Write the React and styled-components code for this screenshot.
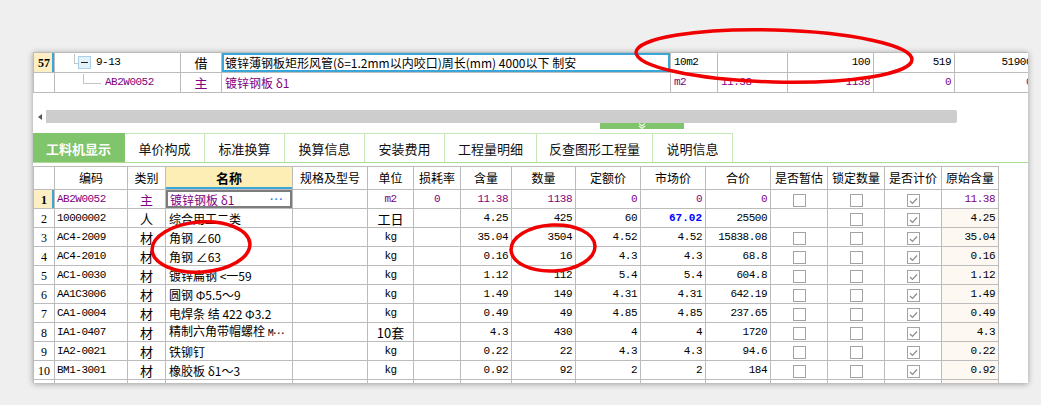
import React from "react";
import styled, { createGlobalStyle, css } from "styled-components";

const GlobalStyle = createGlobalStyle`
  html, body { margin: 0; padding: 0; background: #efefef; }
  body {
    font-family: "Noto Sans CJK SC", "Liberation Sans", sans-serif;
    font-size: 12px;
    color: #000;
  }
`;

const PURPLE = "#800080";
const GRID = "#bcbcbc";

const Page = styled.div`
  position: relative;
  width: 1041px;
  height: 405px;
  box-sizing: border-box;
  padding: 52px 0 0 33px;
  overflow: hidden;
`;

const Panel = styled.div`
  width: 995px;
  height: 331px;
  background: #fff;
  box-shadow: 0 1px 6px rgba(0, 0, 0, 0.35);
  overflow: hidden;
  display: flex;
  flex-direction: column;
`;

const mono = css`
  font-family: "Liberation Mono", "DejaVu Sans Mono", monospace;
  font-size: 11px;
  letter-spacing: -0.5px;
`;

const Grid = styled.table`
  border-collapse: collapse;
  table-layout: fixed;
  width: ${(p) => p.$w}px;
  flex: none;
`;

const Row = styled.tr`
  height: ${(p) => p.$h || 19}px;
`;

const Cell = styled.td`
  border: 1px solid ${GRID};
  padding: 0 ${(p) => (p.$pad != null ? p.$pad : 3)}px;
  white-space: nowrap;
  overflow: hidden;
  text-align: ${(p) => p.$align || "left"};
  color: ${(p) => p.$color || "#000"};
  font-weight: ${(p) => (p.$bold ? 700 : 400)};
  background: ${(p) => p.$bg || "transparent"};
  line-height: 15px;
  ${(p) => p.$mono && mono}
  ${(p) => p.$mono && p.$bold && "letter-spacing: 0;"}
  ${(p) => p.$selRow && css`box-shadow: inset -2px 0 0 #3aa6d8;`}
  ${(p) => p.$selBlue && css`box-shadow: inset 0 0 0 2px #3aa6d8;`}
  ${(p) => p.$selGray && css`box-shadow: inset 0 0 0 2px #7d7d7d;`}
  font-size: ${(p) => (p.$mono ? 11 : p.$size || 12)}px;
`;

const HeadCell = styled.th`
  border: 1px solid ${GRID};
  padding: 0;
  font-weight: ${(p) => (p.$active ? 700 : 400)};
  font-size: ${(p) => (p.$active ? 13 : 12)}px;
  background: ${(p) => (p.$active ? "#fdeeb6" : "#fff")};
  ${(p) => p.$active && css`box-shadow: inset 0 -2px 0 #3aa6d8;`}
  white-space: nowrap;
  overflow: hidden;
  text-align: center;
  line-height: 16px;
`;

const RowNum = styled.span`
  font-family: "Liberation Serif", serif;
  font-size: 12px;
  font-weight: ${(p) => (p.$bold ? 700 : 400)};
`;

const Tree = styled.div`
  display: flex;
  align-items: center;
  height: 18px;
  padding-left: ${(p) => p.$indent}px;
`;

const Connector = styled.span`
  align-self: flex-start;
  width: ${(p) => p.$w}px;
  height: 9px;
  border-left: 1px solid #c4c4c4;
  border-bottom: 1px solid #c4c4c4;
  flex: none;
`;

const ToggleBox = styled.span`
  width: 11px;
  height: 11px;
  border: 1px solid #a9d0e8;
  background: #e3f1fa;
  display: flex;
  align-items: center;
  justify-content: center;
  flex: none;
  &::after {
    content: "";
    width: 7px;
    height: 1px;
    background: #222;
  }
`;

const TreeText = styled.span`
  margin-left: ${(p) => p.$gap}px;
  color: ${(p) => p.$color || "#000"};
  ${mono}
`;

const NameWrap = styled.div`
  display: flex;
  justify-content: space-between;
  align-items: center;
`;

const Dots = styled.span`
  color: #3b7fd8;
  font-family: "Liberation Mono", monospace;
  font-weight: 700;
  letter-spacing: -2px;
  font-size: 11px;
  margin-right: 6px;
`;

const Trail = styled.span`
  font-family: "Liberation Mono", monospace;
  font-size: 10px;
  letter-spacing: -2px;
`;

const Spacer = styled.div`
  height: 17px;
  flex: none;
`;

const ScrollBar = styled.div`
  height: 13px;
  display: flex;
  flex: none;
  background: #fff;
`;

const ScrollBtn = styled.div`
  width: 13px;
  display: flex;
  align-items: center;
  justify-content: center;
  background: #fff;
  &::after {
    content: "";
    border-top: 3px solid transparent;
    border-bottom: 3px solid transparent;
    border-right: 4px solid #555;
  }
`;

const ScrollThumb = styled.div`
  width: 911px;
  background: #cdcdcd;
  border-radius: 0 2px 2px 0;
`;

const HandleRow = styled.div`
  height: 7px;
  flex: none;
  padding-left: 567px;
`;

const Handle = styled.div`
  width: 84px;
  height: 6px;
  background: #80c46c;
  display: flex;
  justify-content: center;
  align-items: flex-start;
`;

const TabBar = styled.div`
  margin-top: 3px;
  height: 29px;
  display: flex;
  flex: none;
  border-bottom: 1px solid #a9dc95;
`;

const Tab = styled.div`
  width: ${(p) => p.$w}px;
  box-sizing: border-box;
  display: flex;
  align-items: center;
  justify-content: center;
  font-size: 13px;
  border-top: 1px solid #c6e8b6;
  border-right: 1px solid #c6e8b6;
  background: ${(p) => (p.$active ? "#80c46c" : "#fff")};
  color: ${(p) => (p.$active ? "#fff" : "#111")};
  font-weight: ${(p) => (p.$active ? 700 : 400)};
  ${(p) => p.$active && "border-color: #80c46c;"}
`;

const TableGap = styled.div`
  height: 3px;
  flex: none;
`;

const Box = styled.span`
  display: inline-flex;
  width: 11px;
  height: 11px;
  border: 1px solid #a3a3a3;
  background: #fff;
  vertical-align: middle;
  align-items: center;
  justify-content: center;
`;

const Overlay = styled.svg`
  position: absolute;
  left: 0;
  top: 0;
  pointer-events: none;
`;

function Check({ on }) {
  return (
    <Box>
      {on && (
        <svg width="9" height="8" viewBox="0 0 9 8">
          <polyline points="1,4 3.5,6.5 8,1.5" fill="none" stroke="#8c8c8c" strokeWidth="1.2" />
        </svg>
      )}
    </Box>
  );
}

const topCols = [21, 126, 41, 449, 47, 70, 86, 81, 81];
const cols = [21, 73, 38, 127, 75, 46, 47, 51, 64, 65, 65, 65, 57, 57, 57, 57];
const headers = ["", "编码", "类别", "名称", "规格及型号", "单位", "损耗率", "含量", "数量", "定额价", "市场价", "合价", "是否暂估", "锁定数量", "是否计价", "原始含量"];

const tabs = [
  ["工料机显示", 92, true],
  ["单价构成", 80],
  ["标准换算", 80],
  ["换算信息", 80],
  ["安装费用", 80],
  ["工程量明细", 92],
  ["反查图形工程量", 116],
  ["说明信息", 80],
];

const rows = [
  { code: "AB2W0052", cat: "主", name: "镀锌钢板 δ1", unit: "m2", loss: "0", qty: "11.38", amt: "1138", dp: "0", mp: "0", total: "0", est: true, orig: "11.38" },
  { code: "10000002", cat: "人", name: "综合用工二类", unit: "工日", loss: "", qty: "4.25", amt: "425", dp: "60", mp: "67.02", total: "25500", est: false, orig: "4.25" },
  { code: "AC4-2009", cat: "材", name: "角钢 ∠60", unit: "kg", loss: "", qty: "35.04", amt: "3504", dp: "4.52", mp: "4.52", total: "15838.08", est: true, orig: "35.04" },
  { code: "AC4-2010", cat: "材", name: "角钢 ∠63", unit: "kg", loss: "", qty: "0.16", amt: "16", dp: "4.3", mp: "4.3", total: "68.8", est: true, orig: "0.16" },
  { code: "AC1-0030", cat: "材", name: "镀锌扁钢 <一59", unit: "kg", loss: "", qty: "1.12", amt: "112", dp: "5.4", mp: "5.4", total: "604.8", est: true, orig: "1.12" },
  { code: "AA1C3006", cat: "材", name: "圆钢 Φ5.5～9", unit: "kg", loss: "", qty: "1.49", amt: "149", dp: "4.31", mp: "4.31", total: "642.19", est: true, orig: "1.49" },
  { code: "CA1-0004", cat: "材", name: "电焊条 结 422 Φ3.2", unit: "kg", loss: "", qty: "0.49", amt: "49", dp: "4.85", mp: "4.85", total: "237.65", est: true, orig: "0.49" },
  { code: "IA1-0407", cat: "材", name: "精制六角带帽螺栓 ", trail: "M···", unit: "10套", loss: "", qty: "4.3", amt: "430", dp: "4", mp: "4", total: "1720", est: true, orig: "4.3" },
  { code: "IA2-0021", cat: "材", name: "铁铆钉", unit: "kg", loss: "", qty: "0.22", amt: "22", dp: "4.3", mp: "4.3", total: "94.6", est: true, orig: "0.22" },
  { code: "BM1-3001", cat: "材", name: "橡胶板 δ1～3", unit: "kg", loss: "", qty: "0.92", amt: "92", dp: "2", mp: "2", total: "184", est: true, orig: "0.92" },
  { code: "", cat: "", name: "", unit: "", loss: "", qty: "", amt: "", dp: "", mp: "", total: "", est: true, orig: "" },
];

function TopGrid() {
  return (
    <Grid $w={1002}>
      <colgroup>
        {topCols.map((w, i) => (
          <col key={i} style={{ width: w }} />
        ))}
      </colgroup>
      <tbody>
        <Row $h={20}>
          <Cell $align="center" $pad={0} $bg="#fdefc3" $selRow>
            <RowNum $bold>57</RowNum>
          </Cell>
          <Cell $pad={0}>
            <Tree $indent={19}>
              <Connector $w={3} />
              <ToggleBox />
              <TreeText $gap={5}>9-13</TreeText>
            </Tree>
          </Cell>
          <Cell $align="center" $size={13}>借</Cell>
          <Cell $selBlue $size={12}>
            镀锌薄钢板矩形风管(δ=1.2mm以内咬口)周长(mm) 4000以下 制安
          </Cell>
          <Cell $mono>10m2</Cell>
          <Cell $mono />
          <Cell $mono $align="right">100</Cell>
          <Cell $mono $align="right">519</Cell>
          <Cell $mono $align="right">51900</Cell>
        </Row>
        <Row $h={20}>
          <Cell />
          <Cell $pad={0}>
            <Tree $indent={28}>
              <Connector $w={17} />
              <TreeText $gap={4} $color={PURPLE}>AB2W0052</TreeText>
            </Tree>
          </Cell>
          <Cell $align="center" $color={PURPLE} $size={13}>主</Cell>
          <Cell $color={PURPLE}>镀锌钢板 δ1</Cell>
          <Cell $mono $color={PURPLE}>m2</Cell>
          <Cell $mono $color={PURPLE}>11.38</Cell>
          <Cell $mono $align="right" $color={PURPLE}>1138</Cell>
          <Cell $mono $align="right" $color={PURPLE}>0</Cell>
          <Cell $mono $align="right" $color={PURPLE}>0</Cell>
        </Row>
      </tbody>
    </Grid>
  );
}

function DetailGrid() {
  return (
    <Grid $w={965}>
      <colgroup>
        {cols.map((w, i) => (
          <col key={i} style={{ width: w }} />
        ))}
      </colgroup>
      <thead>
        <Row $h={23}>
          {headers.map((h, i) => (
            <HeadCell key={i} $active={i === 3}>
              {h}
            </HeadCell>
          ))}
        </Row>
      </thead>
      <tbody>
        {rows.map((r, i) => {
          const first = i === 0;
          const c = first ? PURPLE : undefined;
          const blank = !r.code;
          return (
            <Row key={i}>
              <Cell $align="center" $pad={0} $bg={first ? "#fdefc3" : undefined} $selRow={first}>
                {!blank && <RowNum $bold={first}>{i + 1}</RowNum>}
              </Cell>
              <Cell $mono $pad={2} $color={c}>{r.code}</Cell>
              <Cell $align="center" $color={c} $size={13}>{r.cat}</Cell>
              <Cell $color={c} $selGray={first} $pad={first ? 4 : 3}>
                {first ? (
                  <NameWrap>
                    <span>{r.name}</span>
                    <Dots>···</Dots>
                  </NameWrap>
                ) : (
                  <>
                    {r.name}
                    {r.trail && <Trail>{r.trail}</Trail>}
                  </>
                )}
              </Cell>
              <Cell />
              <Cell $align="center" $color={c} $mono={r.unit === "kg" || r.unit === "m2"} $size={13}>
                {r.unit}
              </Cell>
              <Cell $mono $align="center" $color={c}>{r.loss}</Cell>
              <Cell $mono $align="right" $color={c}>{r.qty}</Cell>
              <Cell $mono $align="right" $color={c}>{r.amt}</Cell>
              <Cell $mono $align="right" $color={c}>{r.dp}</Cell>
              <Cell
                $mono
                $align="right"
                $color={i === 1 ? "#0000ff" : c}
                $bold={i === 1}
              >
                {r.mp}
              </Cell>
              <Cell $mono $align="right" $color={c}>{r.total}</Cell>
              <Cell $align="center" $pad={0}>{r.est && <Check />}</Cell>
              <Cell $align="center" $pad={0}><Check /></Cell>
              <Cell $align="center" $pad={0}><Check on /></Cell>
              <Cell $mono $align="right" $color={c} $bg={first ? undefined : "#fdf8f1"}>
                {r.orig}
              </Cell>
            </Row>
          );
        })}
      </tbody>
    </Grid>
  );
}

export default function App() {
  return (
    <>
      <GlobalStyle />
      <Page>
        <Panel>
          <TopGrid />
          <Spacer />
          <ScrollBar>
            <ScrollBtn />
            <ScrollThumb />
          </ScrollBar>
          <HandleRow>
            <Handle>
              <svg width="10" height="6" viewBox="0 0 10 6">
                <polyline points="2,0.5 5,3 8,0.5" fill="none" stroke="#e8f5e2" strokeWidth="1.2" />
                <polyline points="2,3 5,5.5 8,3" fill="none" stroke="#e8f5e2" strokeWidth="1.2" />
              </svg>
            </Handle>
          </HandleRow>
          <TabBar>
            {tabs.map(([t, w, a]) => (
              <Tab key={t} $w={w} $active={a}>
                {t}
              </Tab>
            ))}
          </TabBar>
          <TableGap />
          <DetailGrid />
        </Panel>
        <Overlay width="1041" height="405" viewBox="0 0 1041 405">
          <g fill="none" stroke="#f00000" strokeWidth="3.5">
            <ellipse cx="774" cy="56" rx="138" ry="26" transform="rotate(1.5 774 56)" />
            <ellipse cx="201" cy="247" rx="49" ry="25" transform="rotate(-4 201 247)" />
            <ellipse cx="553" cy="248" rx="42" ry="23" transform="rotate(-3 553 248)" />
          </g>
        </Overlay>
      </Page>
    </>
  );
}
